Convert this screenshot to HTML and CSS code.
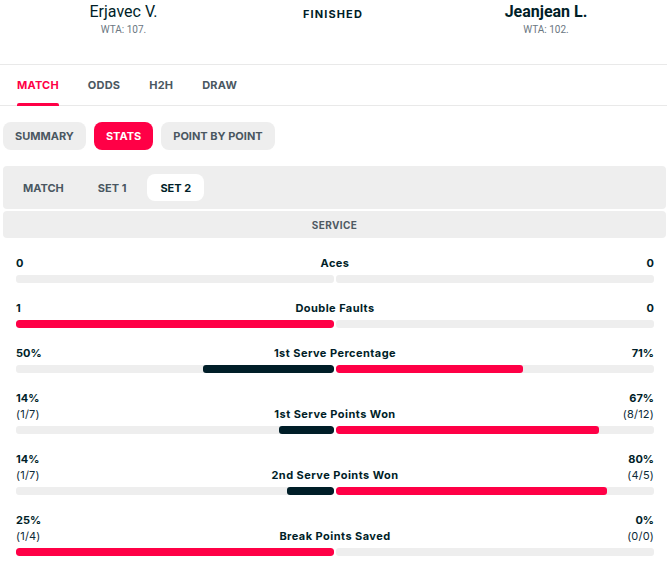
FILE: index.html
```html
<!DOCTYPE html>
<html lang="en">
<head>
<meta charset="utf-8">
<title>Erjavec V. vs Jeanjean L. - Stats</title>
<link rel="stylesheet" href="styles.css">
</head>
<body>
<div class="page">
  <header class="match-header">
    <div class="participant">
      <div class="participant-name">Erjavec V.</div>
      <div class="participant-rank">WTA: 107.</div>
    </div>
    <div class="match-status">FINISHED</div>
    <div class="participant participant-right">
      <div class="participant-name winner">Jeanjean L.</div>
      <div class="participant-rank">WTA: 102.</div>
    </div>
  </header>

  <nav class="tabs">
    <a class="tab active">MATCH</a>
    <a class="tab">ODDS</a>
    <a class="tab">H2H</a>
    <a class="tab">DRAW</a>
  </nav>

  <div class="pills">
    <a class="pill">SUMMARY</a>
    <a class="pill pill-active">STATS</a>
    <a class="pill">POINT BY POINT</a>
  </div>

  <div class="subtabs">
    <a class="subtab">MATCH</a>
    <a class="subtab">SET 1</a>
    <a class="subtab subtab-active">SET 2</a>
  </div>

  <div class="section-head">SERVICE</div>

  <div class="stats">
    <div class="stat">
      <div class="stat-top">
        <div class="stat-val">0</div>
        <div class="stat-label">Aces</div>
        <div class="stat-val right">0</div>
      </div>
      <div class="bars">
        <div class="track left"><div class="fill" style="width:0%"></div></div>
        <div class="track"><div class="fill" style="width:0%"></div></div>
      </div>
    </div>

    <div class="stat">
      <div class="stat-top">
        <div class="stat-val">1</div>
        <div class="stat-label">Double Faults</div>
        <div class="stat-val right">0</div>
      </div>
      <div class="bars">
        <div class="track left"><div class="fill hi" style="width:100%"></div></div>
        <div class="track"><div class="fill" style="width:0%"></div></div>
      </div>
    </div>

    <div class="stat">
      <div class="stat-top">
        <div class="stat-val">50%</div>
        <div class="stat-label">1st Serve Percentage</div>
        <div class="stat-val right">71%</div>
      </div>
      <div class="bars">
        <div class="track left"><div class="fill lo" style="width:41.3%"></div></div>
        <div class="track"><div class="fill hi" style="width:58.7%"></div></div>
      </div>
    </div>

    <div class="stat">
      <div class="stat-top">
        <div class="stat-val">14%<span class="sub">(1/7)</span></div>
        <div class="stat-label">1st Serve Points Won</div>
        <div class="stat-val right">67%<span class="sub">(8/12)</span></div>
      </div>
      <div class="bars">
        <div class="track left"><div class="fill lo" style="width:17.3%"></div></div>
        <div class="track"><div class="fill hi" style="width:82.7%"></div></div>
      </div>
    </div>

    <div class="stat">
      <div class="stat-top">
        <div class="stat-val">14%<span class="sub">(1/7)</span></div>
        <div class="stat-label">2nd Serve Points Won</div>
        <div class="stat-val right">80%<span class="sub">(4/5)</span></div>
      </div>
      <div class="bars">
        <div class="track left"><div class="fill lo" style="width:14.9%"></div></div>
        <div class="track"><div class="fill hi" style="width:85.1%"></div></div>
      </div>
    </div>

    <div class="stat">
      <div class="stat-top">
        <div class="stat-val">25%<span class="sub">(1/4)</span></div>
        <div class="stat-label">Break Points Saved</div>
        <div class="stat-val right">0%<span class="sub">(0/0)</span></div>
      </div>
      <div class="bars">
        <div class="track left"><div class="fill hi" style="width:100%"></div></div>
        <div class="track"><div class="fill" style="width:0%"></div></div>
      </div>
    </div>
  </div>
</div>
</body>
</html>
```

FILE: styles.css
```css
* { box-sizing: border-box; }

html, body {
  margin: 0;
  padding: 0;
  background: #ffffff;
}

body {
  font-family: Inter, "Noto Sans", "DejaVu Sans", sans-serif;
  color: #001e28;
  width: 667px;
  height: 573px;
  overflow: hidden;
}

a { text-decoration: none; cursor: pointer; }

.page {
  padding: 0 1px 0 3px;
}

/* Header */
.match-header {
  display: grid;
  grid-template-columns: 247px 172px 1fr;
  height: 65px;
  margin: 0 -1px 0 -3px;
  border-bottom: 1px solid #e9e9e9;
  align-items: start;
}

.participant {
  display: flex;
  flex-direction: column;
  align-items: center;
  padding-top: 2px;
}

.participant-right {
  padding-left: 6px;
}

.participant-name {
  font-family: Roboto, "Liberation Sans", sans-serif;
  font-size: 16px;
  line-height: 20px;
  font-weight: 400;
  color: #001e28;
}

.participant-name.winner {
  font-weight: 700;
}

.participant-rank {
  font-family: Roboto, "Liberation Sans", sans-serif;
  font-size: 10px;
  line-height: 12px;
  color: #6b7782;
  margin-top: 2px;
}

.match-status {
  text-align: center;
  font-size: 11px;
  font-weight: 700;
  letter-spacing: 1.1px;
  line-height: 14px;
  padding-top: 7px;
  color: #001e28;
}

/* Main tabs */
.tabs {
  display: flex;
  height: 41px;
  margin: 0 -1px 0 -3px;
  padding-left: 3px;
  border-bottom: 1px solid #e9e9e9;
}

.tab {
  position: relative;
  display: flex;
  align-items: center;
  padding: 0 14px;
  font-size: 11px;
  font-weight: 700;
  letter-spacing: 0.2px;
  color: #4a5761;
}

.tab + .tab {
  margin-left: 1px;
}

.tab.active {
  color: #ff0046;
}

.tab.active::after {
  content: "";
  position: absolute;
  left: 14px;
  right: 14px;
  bottom: -1px;
  height: 3px;
  border-radius: 2px 2px 0 0;
  background: #ff0046;
}

/* Pills */
.pills {
  display: flex;
  gap: 8px;
  margin-top: 16px;
}

.pill {
  display: flex;
  align-items: center;
  height: 28px;
  padding: 0 12px;
  border-radius: 8px;
  background: #eeeeee;
  font-size: 11px;
  font-weight: 700;
  letter-spacing: 0;
  color: #4a5761;
}

.pill-active {
  background: #ff0046;
  color: #ffffff;
}

/* Sub tabs */
.subtabs {
  display: flex;
  gap: 8px;
  margin-top: 16px;
  padding: 8px 7px;
  background: #eeeeee;
  border-radius: 4px;
}

.subtab {
  display: flex;
  align-items: center;
  height: 27px;
  padding: 0 13px;
  border-radius: 8px;
  font-size: 11px;
  font-weight: 700;
  letter-spacing: 0;
  color: #4a5761;
}

.subtab-active {
  background: #ffffff;
  color: #001e28;
}

.section-head {
  margin-top: 2px;
  height: 27px;
  display: flex;
  align-items: center;
  justify-content: center;
  background: #eeeeee;
  border-radius: 4px;
  font-size: 10px;
  font-weight: 700;
  letter-spacing: 0.4px;
  color: #4f5a63;
}

/* Stats */
.stats {
  display: flex;
  flex-direction: column;
  gap: 17px;
  padding: 17px 12px 0 13px;
}

.stat-top {
  display: flex;
  align-items: flex-end;
  justify-content: space-between;
  font-size: 11px;
  line-height: 16px;
  font-weight: 700;
  letter-spacing: 0.45px;
}

.stat-val {
  display: flex;
  flex-direction: column;
  align-items: flex-start;
  min-width: 60px;
  font-weight: 700;
  letter-spacing: 0;
}

.stat-val.right {
  align-items: flex-end;
  text-align: right;
}

.stat-val .sub {
  font-weight: 400;
  letter-spacing: 0.2px;
  color: #0d2a38;
}

.stat-label {
  flex: 1;
  text-align: center;
}

.bars {
  display: flex;
  gap: 2px;
  margin-top: 4px;
}

.track {
  flex: 1;
  height: 8px;
  border-radius: 3px;
  background: #eeeeee;
  display: flex;
  overflow: hidden;
}

.track.left {
  justify-content: flex-end;
}

.fill {
  height: 100%;
  border-radius: 3px;
}

.fill.hi { background: #ff0046; }
.fill.lo { background: #001e28; }
```
